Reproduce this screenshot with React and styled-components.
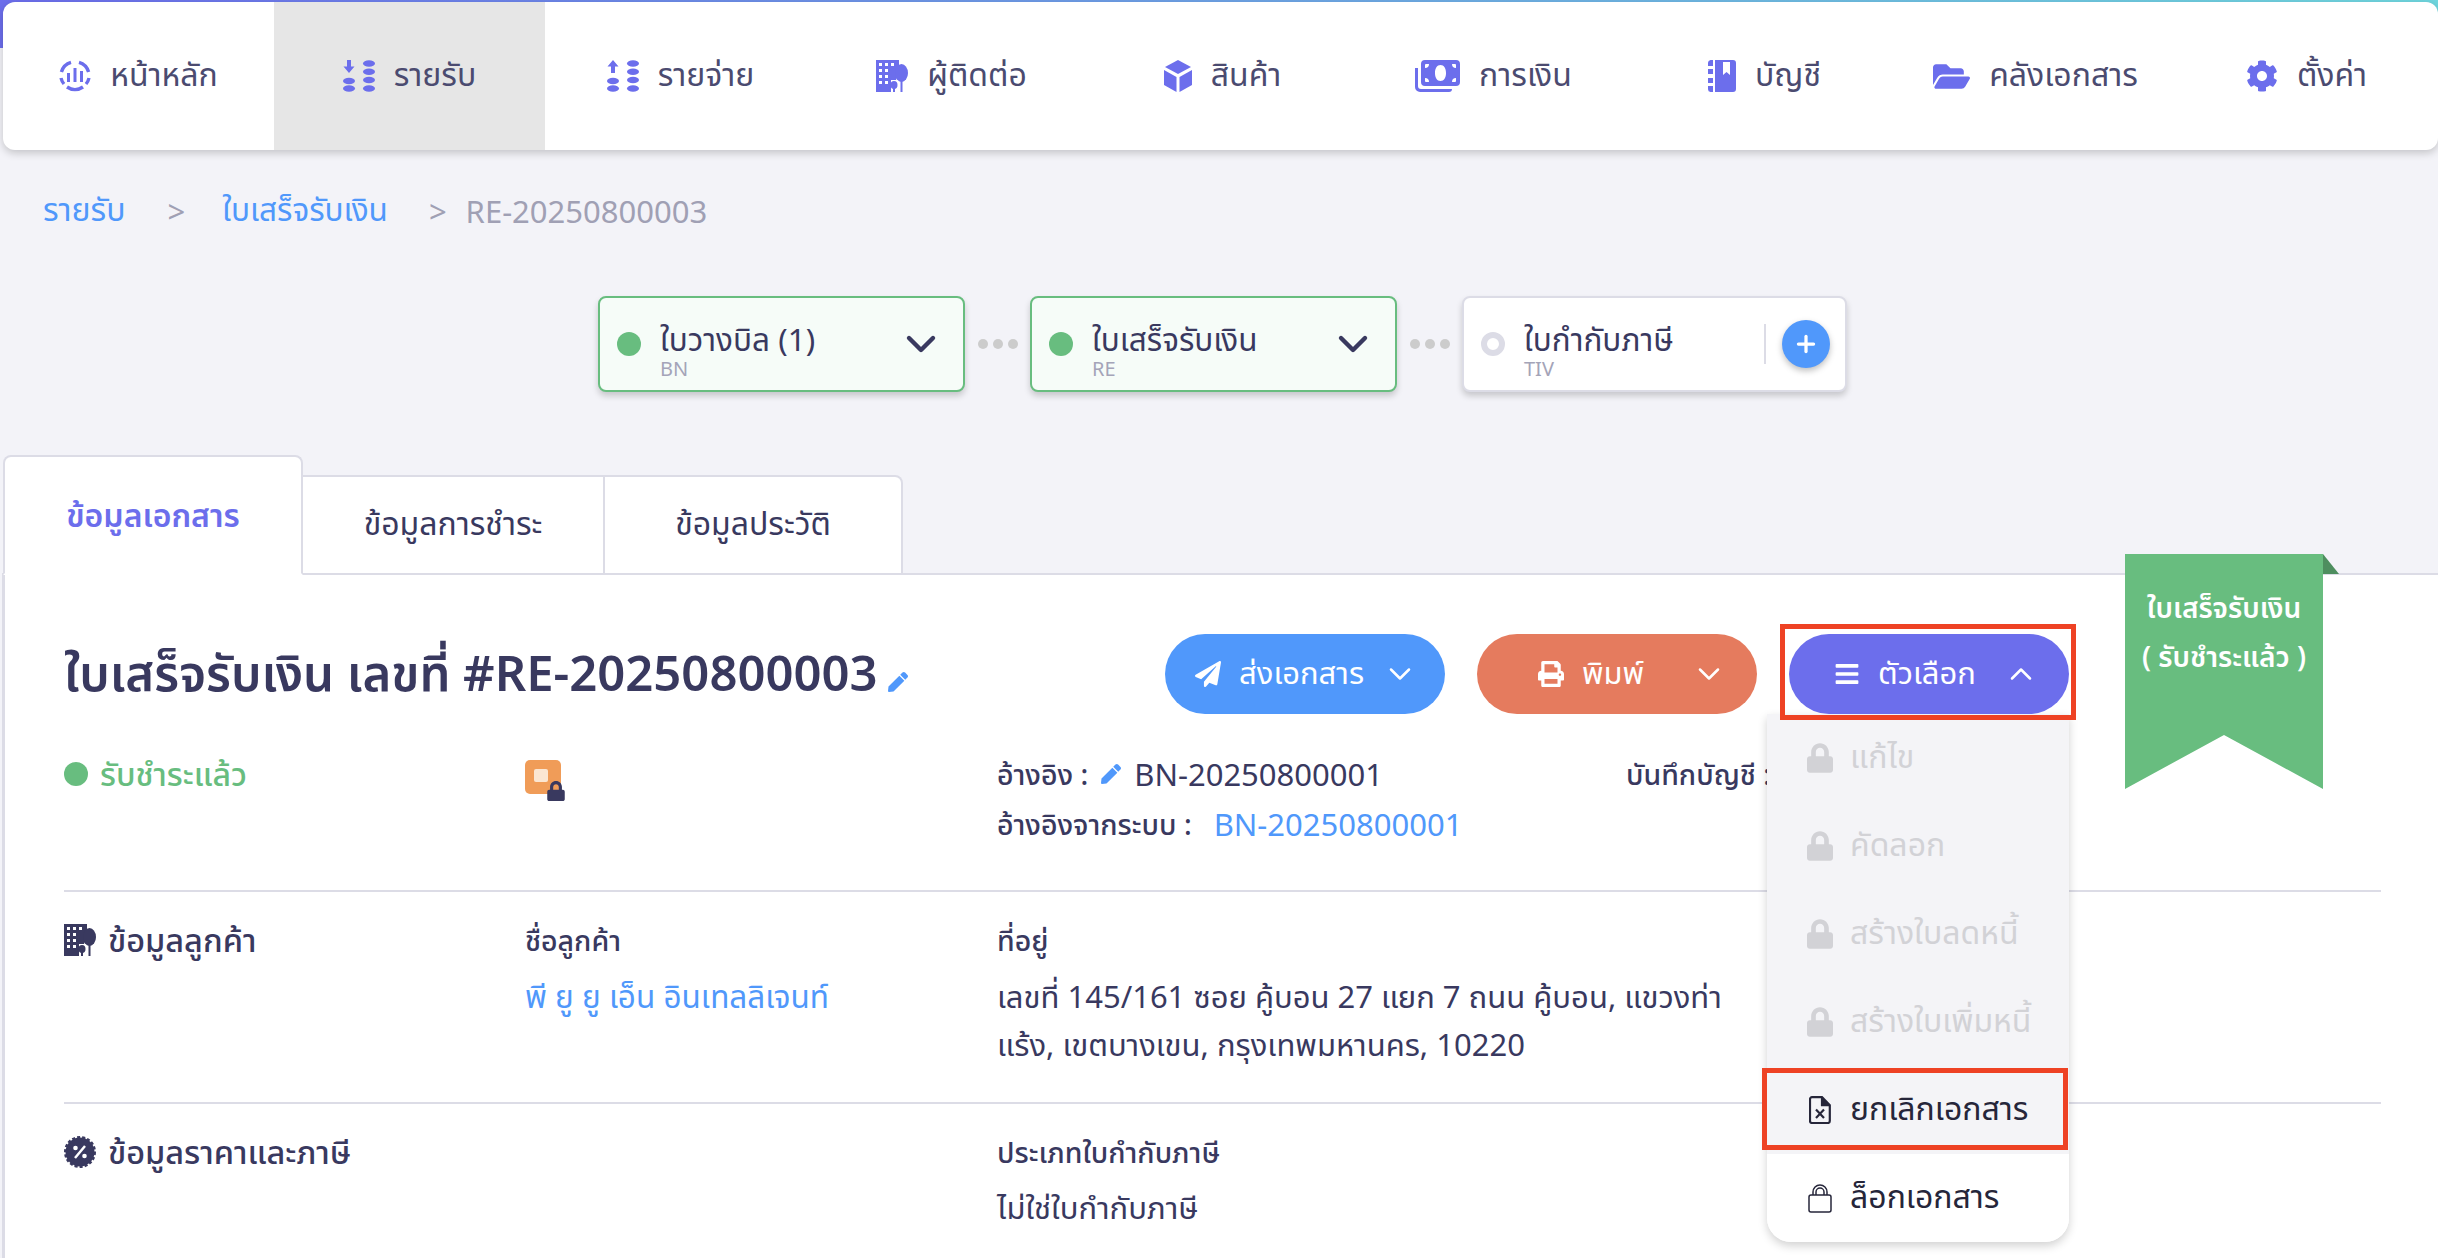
import React from 'react';
import styled, { createGlobalStyle } from 'styled-components';
import { ChevronDown, ChevronUp, Plus } from 'lucide-react';
import { FaBars, FaCog, FaFolderOpen, FaLock, FaPaperPlane, FaPen, FaPrint } from 'react-icons/fa';

const PURPLE = '#6c6eec';
const BLUE = '#5098fb';
const GREEN = '#68bd7f';
const DARK = '#39395f';
const LINE = '#dcdce6';

const GlobalStyle = createGlobalStyle`
  html, body {
    margin: 0;
    height: 100%;
    overflow: hidden;
    background: #f3f3f8;
  }
  body {
    font-family: "Noto Sans", "Noto Sans Thai", "Open Sans", sans-serif;
    color: ${DARK};
  }
`;

const Page = styled.div`
  width: 2438px;
  height: 1258px;
  overflow: hidden;
`;

const TopBar = styled.header`
  padding: 2px 0 0 3px;
  background: linear-gradient(90deg, #6c6eec, #6fd6de) no-repeat;
  background-size: 100% 48px;
`;

const Nav = styled.nav`
  display: grid;
  grid-template-columns: repeat(9, 271px);
  height: 148px;
  background: #fff;
  border-radius: 12px;
  overflow: hidden;
  box-shadow: 0 3px 8px rgba(0, 0, 0, 0.2);
`;

const NavItem = styled.a`
  display: flex;
  align-items: center;
  justify-content: center;
  gap: 19px;
  font-size: 32px;
  color: #4b4b70;
  background: ${(p) => (p.$active ? '#e6e6e6' : 'transparent')};
  svg {
    color: ${PURPLE};
    flex: none;
  }
`;

const Crumbs = styled.div`
  display: flex;
  align-items: center;
  height: 60px;
  margin-top: 31px;
  padding-left: 43px;
  font-size: 31px;
  color: #a0a0b4;
`;

const CrumbLink = styled.a`
  color: ${BLUE};
  font-size: ${(p) => p.$size}px;
`;

const CrumbSep = styled.span`
  margin: ${(p) => p.$margin};
`;

const FlowRow = styled.div`
  display: flex;
  align-items: center;
  margin-top: 55px;
  padding-left: 598px;
`;

const FlowCard = styled.div`
  display: flex;
  align-items: center;
  box-sizing: border-box;
  width: ${(p) => (p.$done ? '367px' : '385px')};
  height: 96px;
  padding: 0 ${(p) => (p.$done ? '18px' : '15px')} 0 17px;
  border: 2px solid ${(p) => (p.$done ? GREEN : LINE)};
  border-radius: 8px;
  background: ${(p) => (p.$done ? '#f6fcf8' : '#fff')};
  box-shadow: 0 4px 6px rgba(0, 0, 0, 0.18);
`;

const FlowDot = styled.span`
  box-sizing: border-box;
  flex: none;
  width: 24px;
  height: 24px;
  border-radius: 50%;
  background: ${(p) => (p.$done ? GREEN : '#fff')};
  border: ${(p) => (p.$done ? '0' : `6px solid ${LINE}`)};
`;

const FlowText = styled.div`
  flex: 1;
  margin-left: 19px;
  padding-top: 14px;
`;

const FlowTitle = styled.div`
  font-size: 31.5px;
  line-height: 36px;
`;

const FlowCode = styled.div`
  font-size: 20px;
  line-height: 24px;
  color: #a4a4b8;
`;

const FlowSplit = styled.span`
  width: 2px;
  height: 40px;
  background: ${LINE};
`;

const AddButton = styled.button`
  display: flex;
  align-items: center;
  justify-content: center;
  width: 48px;
  height: 48px;
  margin-left: 16px;
  padding: 0;
  border: 0;
  border-radius: 50%;
  background: ${BLUE};
  color: #fff;
  box-shadow: 0 3px 6px rgba(0, 0, 0, 0.25);
`;

const Dots = styled.div`
  display: flex;
  justify-content: center;
  gap: 5px;
  width: 65px;
  span {
    width: 10px;
    height: 10px;
    border-radius: 50%;
    background: #cccccc;
  }
`;

const Tabs = styled.div`
  display: flex;
  align-items: flex-end;
  position: relative;
  z-index: 1;
  margin: 63px 0 -2px 3px;
`;

const Tab = styled.div`
  box-sizing: border-box;
  display: flex;
  align-items: center;
  justify-content: center;
  width: ${(p) => p.$width}px;
  height: ${(p) => (p.$active ? '120px' : '100px')};
  padding-top: ${(p) => (p.$active ? '3px' : '0')};
  font-size: 32px;
  font-weight: ${(p) => (p.$active ? 600 : 400)};
  color: ${(p) => (p.$active ? PURPLE : DARK)};
  background: #fff;
  border: 2px solid ${LINE};
  border-left-width: ${(p) => (p.$active ? '2px' : '0')};
  border-bottom-color: ${(p) => (p.$active ? '#fff' : LINE)};
  border-radius: ${(p) => p.$radius};
`;

const Panel = styled.main`
  position: relative;
  margin-left: 2px;
  height: 700px;
  padding: 59px 57px 0 59px;
  background: #fff;
  border-top: 2px solid ${LINE};
  border-left: 3px solid ${LINE};
`;

const TitleRow = styled.div`
  display: flex;
  align-items: center;
  justify-content: space-between;
  padding-right: 312px;
`;

const Title = styled.h1`
  display: flex;
  align-items: center;
  gap: 10px;
  margin: 0;
  padding-top: 3px;
  font-size: 49px;
  font-weight: 600;
  svg {
    color: ${BLUE};
    margin-top: 12px;
  }
`;

const Actions = styled.div`
  display: flex;
  gap: 32px;
`;

const ActionWrap = styled.div`
  position: relative;
`;

const ActionButton = styled.button`
  display: flex;
  align-items: center;
  gap: 18px;
  box-sizing: border-box;
  width: 280px;
  height: 80px;
  padding: 0 30px 0 ${(p) => p.$pad}px;
  border: 0;
  border-radius: 40px;
  font: inherit;
  font-size: 31px;
  white-space: nowrap;
  color: #fff;
  background: ${(p) => p.$color};
  position: relative;
  z-index: 2;
  svg {
    flex: none;
  }
  svg:last-child {
    margin-left: auto;
  }
`;

const RedBox = styled.div`
  position: absolute;
  top: ${(p) => p.$top}px;
  left: ${(p) => p.$left}px;
  right: ${(p) => p.$right}px;
  height: ${(p) => p.$height}px;
  box-sizing: border-box;
  border: 5px solid #ee4224;
  z-index: 3;
  pointer-events: none;
`;

const Menu = styled.div`
  position: absolute;
  top: 80px;
  right: 0;
  width: 302px;
  background: #fff;
  border-radius: 0 0 24px 24px;
  overflow: hidden;
  box-shadow: 0 4px 10px rgba(0, 0, 0, 0.18);
`;

const MenuItem = styled.div`
  display: flex;
  align-items: center;
  gap: 17px;
  height: 88px;
  padding-left: 40px;
  font-size: 32px;
  color: ${(p) => (p.$disabled ? '#d2d2d6' : '#26263a')};
  background: ${(p) => (p.$plain ? '#fff' : '#f4f4f7')};
`;

const MenuIcon = styled.span`
  display: flex;
  justify-content: center;
  width: 26px;
`;

const Ribbon = styled.div`
  position: absolute;
  top: -21px;
  left: 2120px;
  width: 198px;
  height: 235px;
  padding-top: 29px;
  box-sizing: border-box;
  background: ${GREEN};
  clip-path: polygon(0 0, 100% 0, 100% 100%, 50% 77%, 0 100%);
  color: #fff;
  font-size: 28px;
  font-weight: 600;
  line-height: 49px;
  text-align: center;
`;

const RibbonFold = styled.div`
  position: absolute;
  top: -21px;
  left: 2318px;
  width: 16px;
  height: 20px;
  background: #4e8e5f;
  clip-path: polygon(0 0, 100% 100%, 0 100%);
`;

const Grid = styled.div`
  display: grid;
  grid-template-columns: 461px 472px 629px 1fr;
  padding: ${(p) => p.$padding};
  border-bottom: ${(p) => (p.$line ? `2px solid ${LINE}` : '0')};
  font-size: 31px;
  line-height: 48px;
`;

const Status = styled.div`
  display: flex;
  align-items: center;
  gap: 12px;
  font-size: 32px;
  font-weight: 500;
  color: ${GREEN};
  height: 48px;
  span {
    width: 24px;
    height: 24px;
    border-radius: 50%;
    background: ${GREEN};
  }
`;

const LockedDoc = styled.div`
  position: relative;
  width: 36px;
  height: 34px;
  margin-top: 10px;
  border-radius: 5px;
  background: #f09c58;
  svg {
    position: absolute;
    right: -5px;
    bottom: -7px;
    color: ${DARK};
  }
  i {
    position: absolute;
    left: 9px;
    top: 9px;
    width: 14px;
    height: 13px;
    border-radius: 2px;
    background: #fbe6d2;
  }
`;

const Line = styled.div`
  display: flex;
  align-items: center;
  gap: ${(p) => p.$gap || 0}px;
  height: ${(p) => p.$height || 48}px;
  white-space: nowrap;
`;

const Label = styled.span`
  font-weight: 500;
  font-size: 28.5px;
`;

const Link = styled.a`
  color: ${BLUE};
`;

const Heading = styled.div`
  display: flex;
  align-items: center;
  gap: 12px;
  font-size: 32.5px;
  font-weight: 500;
  height: 48px;
`;

const Value = styled.div`
  margin-top: ${(p) => p.$gap || 8}px;
  font-size: ${(p) => p.$size || 31}px;
`;

const Dashboard = () => (
  <svg width="32" height="32" viewBox="0 0 32 32" fill="none" stroke="currentColor">
    <path d="M12 2.400A14 14 0 0 0 2.400 12M2 18a14 14 0 0 0 3 6" strokeWidth="3.400" />
    <path d="M20 2.400A14 14 0 0 1 29.600 12M30 18a14 14 0 0 1-3 6M8 27a14 14 0 0 0 16 0" strokeWidth="3.400" />
    <path d="M9.500 13v9M16 8v14M22.500 11v11" strokeWidth="3" />
  </svg>
);

const Coin = ({ x, y }) => <ellipse cx={x} cy={y} rx="6" ry="3.200" />;

const CoinStack = ({ up }) => (
  <svg width="32" height="32" viewBox="0 0 32 32" fill="currentColor">
    {up ? (
      <path d="M6 0l5.500 6.500H8V13H4V6.500H.5z" />
    ) : (
      <path d="M4 0h4v6.500h3.500L6 13 .5 6.500H4z" />
    )}
    <Coin x={6} y={21} />
    <Coin x={6} y={28.5} />
    <Coin x={26} y={3.5} />
    <Coin x={26} y={11.8} />
    <Coin x={26} y={20} />
    <Coin x={26} y={28.5} />
  </svg>
);

const BuildingTree = ({ size = 32, color = 'currentColor' }) => (
  <svg width={size} height={size} viewBox="0 0 32 32" fill={color}>
    <path d="M0 0h23v16a7 7 0 0 0-3 4h-5v12H0z" />
    <g fill="#fff">
      <rect x="3" y="3" width="3" height="3" />
      <rect x="9" y="3" width="3" height="3" />
      <rect x="15" y="3" width="3" height="3" />
      <rect x="3" y="9" width="3" height="3" />
      <rect x="9" y="9" width="3" height="3" />
      <rect x="3" y="15" width="3" height="3" />
      <rect x="9" y="15" width="3" height="3" />
      <rect x="3" y="21" width="3" height="3" />
      <rect x="9" y="21" width="3" height="3" />
    </g>
    <ellipse cx="25.500" cy="13" rx="6.500" ry="9" />
    <rect x="24.500" y="20" width="2" height="12" />
    <ellipse cx="18" cy="25" rx="3.500" ry="4" />
    <rect x="17" y="27" width="2" height="5" />
  </svg>
);

const Cube = () => (
  <svg width="28" height="32" viewBox="0 0 28 32" fill="currentColor">
    <path d="M14 0l13 7-13 7L1 7z" />
    <path d="M0 10l12.500 7v15L0 25z" />
    <path d="M28 10l-12.500 7v15L28 25z" />
  </svg>
);

const Money = () => (
  <svg width="45" height="32" viewBox="0 0 45 32" fill="currentColor">
    <path
      fillRule="evenodd"
      d="M10 0h31a4 4 0 0 1 4 4v18a4 4 0 0 1-4 4H10a4 4 0 0 1-4-4V4a4 4 0 0 1 4-4zm15.500 5C22 5 20 8.500 20 13s2 8 5.500 8 5.500-3.500 5.500-8-2-8-5.500-8zM11 4h3a4 4 0 0 1-4 4V5a1 1 0 0 1 1-1zm26 0h3a1 1 0 0 1 1 1v3a4 4 0 0 1-4-4zM10 18a4 4 0 0 1 4 4h-3a1 1 0 0 1-1-1zm31 0v3a1 1 0 0 1-1 1h-3a4 4 0 0 1 4-4z"
    />
    <path d="M0 8h3v18a3 3 0 0 0 3 3h31a3 3 0 0 1-3 3H5a5 5 0 0 1-5-5z" />
  </svg>
);

const Notebook = () => (
  <svg width="28" height="32" viewBox="0 0 28 32" fill="currentColor">
    <path
      fillRule="evenodd"
      d="M7 0h18a3 3 0 0 1 3 3v26a3 3 0 0 1-3 3H7zm8 2v13l3.500-3 3.500 3V2z"
    />
    <path d="M2.500 0H5v6H0V3a3 3 0 0 1 2.500-3zM0 9h5v5H0zM0 18h5v5H0zM0 26h5v6H2.500A3 3 0 0 1 0 29z" />
  </svg>
);

const PercentBadge = () => (
  <svg width="32" height="32" viewBox="0 0 32 32">
    <circle cx="16" cy="16" r="14.500" fill={DARK} stroke={DARK} strokeWidth="3" strokeDasharray="3 2" />
    <path d="M21 10L11 22" stroke="#fff" strokeWidth="2.500" />
    <circle cx="11.500" cy="12" r="2.300" fill="#fff" />
    <circle cx="20.500" cy="20" r="2.300" fill="#fff" />
  </svg>
);

const FileX = () => (
  <svg width="22" height="28" viewBox="0 0 22 28" fill="none" stroke="#26263a" strokeWidth="2.200">
    <path d="M3 1.200h10l7.800 8V25a2 2 0 0 1-2 2H3a2 2 0 0 1-2-2V3.200a2 2 0 0 1 2-2z" />
    <path d="M13 1.200v8h7.800" fill="#26263a" />
    <path d="M7 13.500l8 8.500M15 13.500l-8 8.500" />
  </svg>
);

const LockOutline = () => (
  <svg width="24" height="30" viewBox="0 0 24 30" fill="none" stroke="#26263a" strokeWidth="1.500">
    <rect x="1" y="12" width="22" height="17" rx="2" />
    <path d="M5 12V9a7 7 0 0 1 14 0v3M8 12V9a4 4 0 0 1 8 0v3" />
  </svg>
);

const navItems = [
  { label: 'หน้าหลัก', icon: <Dashboard /> },
  { label: 'รายรับ', icon: <CoinStack />, active: true },
  { label: 'รายจ่าย', icon: <CoinStack up /> },
  { label: 'ผู้ติดต่อ', icon: <BuildingTree /> },
  { label: 'สินค้า', icon: <Cube /> },
  { label: 'การเงิน', icon: <Money /> },
  { label: 'บัญชี', icon: <Notebook /> },
  { label: 'คลังเอกสาร', icon: <FaFolderOpen size={37} /> },
  { label: 'ตั้งค่า', icon: <FaCog size={32} /> },
];

const disabledActions = ['แก้ไข', 'คัดลอก', 'สร้างใบลดหนี้', 'สร้างใบเพิ่มหนี้'];

const Connector = () => (
  <Dots>
    <span />
    <span />
    <span />
  </Dots>
);

export default function App() {
  return (
    <Page>
      <GlobalStyle />
      <TopBar>
        <Nav>
          {navItems.map((item) => (
            <NavItem key={item.label} $active={item.active}>
              {item.icon}
              {item.label}
            </NavItem>
          ))}
        </Nav>
      </TopBar>

      <Crumbs>
        <CrumbLink $size={32}>รายรับ</CrumbLink>
        <CrumbSep $margin="0 37px 0 42px">&gt;</CrumbSep>
        <CrumbLink $size={31.5}>ใบเสร็จรับเงิน</CrumbLink>
        <CrumbSep $margin="0 19px 0 41px">&gt;</CrumbSep>
        RE-20250800003
      </Crumbs>

      <FlowRow>
        <FlowCard $done>
          <FlowDot $done />
          <FlowText>
            <FlowTitle>ใบวางบิล (1)</FlowTitle>
            <FlowCode>BN</FlowCode>
          </FlowText>
          <ChevronDown size={48} color={DARK} strokeWidth={2.2} />
        </FlowCard>
        <Connector />
        <FlowCard $done>
          <FlowDot $done />
          <FlowText>
            <FlowTitle>ใบเสร็จรับเงิน</FlowTitle>
            <FlowCode>RE</FlowCode>
          </FlowText>
          <ChevronDown size={48} color={DARK} strokeWidth={2.2} />
        </FlowCard>
        <Connector />
        <FlowCard>
          <FlowDot />
          <FlowText>
            <FlowTitle>ใบกำกับภาษี</FlowTitle>
            <FlowCode>TIV</FlowCode>
          </FlowText>
          <FlowSplit />
          <AddButton>
            <Plus size={26} strokeWidth={3} />
          </AddButton>
        </FlowCard>
      </FlowRow>

      <Tabs>
        <Tab $active $width={300} $radius="8px 8px 0 0">
          ข้อมูลเอกสาร
        </Tab>
        <Tab $width={302} $radius="0">
          ข้อมูลการชำระ
        </Tab>
        <Tab $width={298} $radius="0 8px 0 0">
          ข้อมูลประวัติ
        </Tab>
      </Tabs>

      <Panel>
        <RibbonFold />
        <Ribbon>
          ใบเสร็จรับเงิน
          <br />( รับชำระแล้ว )
        </Ribbon>

        <TitleRow>
          <Title>
            ใบเสร็จรับเงิน เลขที่ #RE-20250800003
            <FaPen size={20} />
          </Title>
          <Actions>
            <ActionButton $color={BLUE} $pad={30}>
              <FaPaperPlane size={26} />
              ส่งเอกสาร
              <ChevronDown size={36} strokeWidth={1.7} />
            </ActionButton>
            <ActionButton $color="#e57b5e" $pad={61}>
              <FaPrint size={26} />
              พิมพ์
              <ChevronDown size={36} strokeWidth={1.7} />
            </ActionButton>
            <ActionWrap>
              <ActionButton $color={PURPLE} $pad={45}>
                <FaBars size={26} />
                ตัวเลือก
                <ChevronUp size={36} strokeWidth={1.7} />
              </ActionButton>
              <RedBox $top={-10} $left={-9} $right={-7} $height={96} />
              <Menu>
                {disabledActions.map((label) => (
                  <MenuItem key={label} $disabled>
                    <MenuIcon>
                      <FaLock size={30} />
                    </MenuIcon>
                    {label}
                  </MenuItem>
                ))}
                <MenuItem>
                  <MenuIcon>
                    <FileX />
                  </MenuIcon>
                  ยกเลิกเอกสาร
                </MenuItem>
                <MenuItem $plain>
                  <MenuIcon>
                    <LockOutline />
                  </MenuIcon>
                  ล็อกเอกสาร
                </MenuItem>
              </Menu>
              <RedBox $top={434} $left={-27} $right={1} $height={82} />
            </ActionWrap>
          </Actions>
        </TitleRow>

        <Grid $padding="36px 0 40px" $line>
          <Status>
            <span />
            รับชำระแล้ว
          </Status>
          <div>
            <LockedDoc>
              <i />
              <FaLock size={20} />
            </LockedDoc>
          </div>
          <div>
            <Line $gap={13}>
              <Label>อ้างอิง :</Label>
              <FaPen size={20} color={BLUE} />
              BN-20250800001
            </Line>
            <Line $gap={22} $height={52}>
              <Label>อ้างอิงจากระบบ :</Label>
              <Link>BN-20250800001</Link>
            </Line>
          </div>
          <Label>บันทึกบัญชี :</Label>
        </Grid>

        <Grid $padding="24px 0 34px" $line>
          <Heading>
            <BuildingTree color={DARK} />
            ข้อมูลลูกค้า
          </Heading>
          <div>
            <Line>
              <Label>ชื่อลูกค้า</Label>
            </Line>
            <Value $size={31.5}>
              <Link>พี ยู ยู เอ็น อินเทลลิเจนท์</Link>
            </Value>
          </div>
          <div>
            <Line>
              <Label>ที่อยู่</Label>
            </Line>
            <Value>
              <Line>เลขที่ 145/161 ซอย คู้บอน 27 แยก 7 ถนน คู้บอน, แขวงท่า</Line>
              <Line>แร้ง, เขตบางเขน, กรุงเทพมหานคร, 10220</Line>
            </Value>
          </div>
        </Grid>

        <Grid $padding="24px 0 0">
          <Heading>
            <PercentBadge />
            ข้อมูลราคาและภาษี
          </Heading>
          <span />
          <div>
            <Line>
              <Label>ประเภทใบกำกับภาษี</Label>
            </Line>
            <Value $gap={7}>ไม่ใช่ใบกำกับภาษี</Value>
          </div>
        </Grid>
      </Panel>
    </Page>
  );
}
